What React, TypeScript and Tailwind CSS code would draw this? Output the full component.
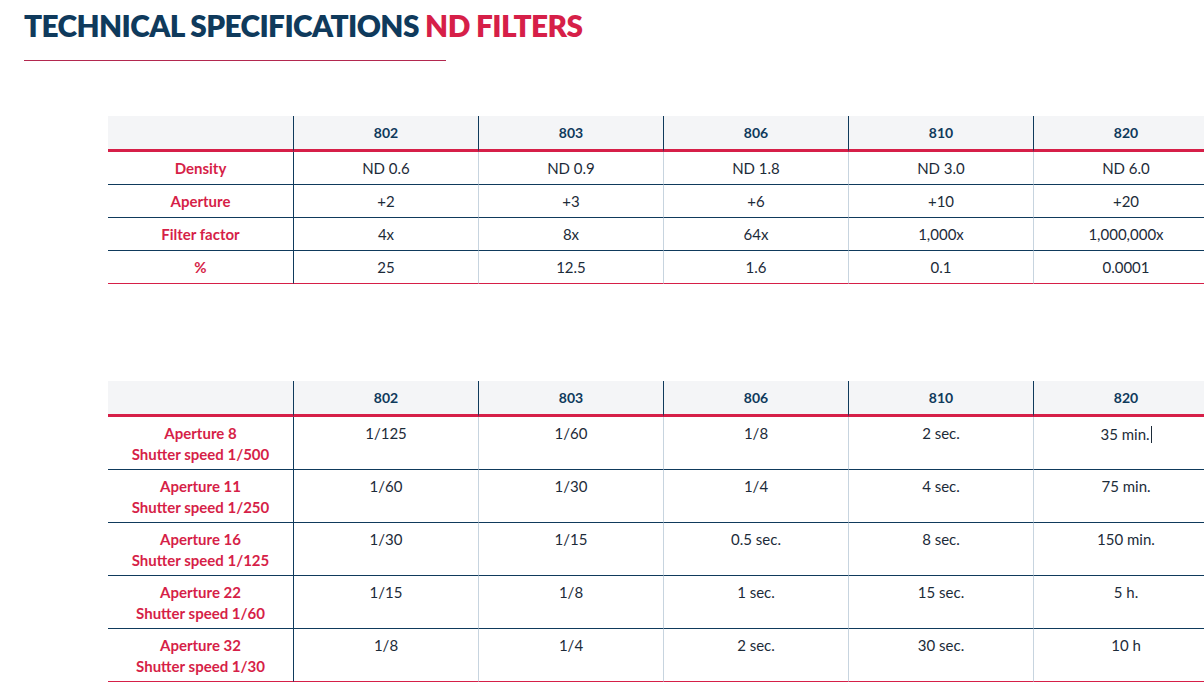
const cols = ["802", "803", "806", "810", "820"];

const specRows: { label: string; values: string[] }[] = [
  { label: "Density", values: ["ND 0.6", "ND 0.9", "ND 1.8", "ND 3.0", "ND 6.0"] },
  { label: "Aperture", values: ["+2", "+3", "+6", "+10", "+20"] },
  { label: "Filter factor", values: ["4x", "8x", "64x", "1,000x", "1,000,000x"] },
  { label: "%", values: ["25", "12.5", "1.6", "0.1", "0.0001"] },
];

const exposureRows: { label: [string, string]; values: string[] }[] = [
  { label: ["Aperture 8", "Shutter speed 1/500"], values: ["1/125", "1/60", "1/8", "2 sec.", "35 min."] },
  { label: ["Aperture 11", "Shutter speed 1/250"], values: ["1/60", "1/30", "1/4", "4 sec.", "75 min."] },
  { label: ["Aperture 16", "Shutter speed 1/125"], values: ["1/30", "1/15", "0.5 sec.", "8 sec.", "150 min."] },
  { label: ["Aperture 22", "Shutter speed 1/60"], values: ["1/15", "1/8", "1 sec.", "15 sec.", "5 h."] },
  { label: ["Aperture 32", "Shutter speed 1/30"], values: ["1/8", "1/4", "2 sec.", "30 sec.", "10 h"] },
];

function HeaderRow() {
  return (
    <thead>
      <tr className="h-[36px] bg-[#f4f5f7]">
        <th className="w-[185px] border-b-[3px] border-[#d61f48]" />
        {cols.map((c) => (
          <th
            key={c}
            className="w-[185px] border-b-[3px] border-l border-b-[#d61f48] border-l-[#0f3a5c] text-[14px] font-bold text-[#0f3a5c] align-middle"
          >
            {c}
          </th>
        ))}
      </tr>
    </thead>
  );
}

export default function App() {
  return (
    <div
      className="min-h-[691px] w-full overflow-hidden bg-white text-[#1c2b39]"
      style={{ fontFamily: "Lato, 'Open Sans', sans-serif" }}
    >
      <div className="pl-6 pt-[6px]">
        <h1 className="text-[29.8px] font-extrabold leading-[40px] tracking-[-0.6px] text-[#0f3a5c]">
          TECHNICAL SPECIFICATIONS <span className="text-[#d61f48]">ND FILTERS</span>
        </h1>
        <div className="mt-[14px] h-px w-[422px] bg-[#b3284f]" />
      </div>

      {/* specs */}
      <div className="mt-[55px] pl-[108px]">
        <table className="w-[1110px] table-fixed border-separate border-spacing-0">
          <HeaderRow />
          <tbody>
            {specRows.map((row, i) => {
              const last = i === specRows.length - 1;
              const bottom = last ? "border-b-[#d61f48]" : "border-b-[#0f3a5c]";
              return (
                <tr key={row.label} className="h-[33px]">
                  <td className={`border-b text-center text-[15px] font-bold text-[#d61f48] ${bottom}`}>
                    {row.label}
                  </td>
                  {row.values.map((v, j) => (
                    <td
                      key={j}
                      className={`border-b border-l text-center text-[15px] ${bottom} ${
                        j === 0 ? "border-l-[#0f3a5c]" : "border-l-[#c7d4df]"
                      }`}
                    >
                      {v}
                    </td>
                  ))}
                </tr>
              );
            })}
          </tbody>
        </table>
      </div>

      {/* exposure */}
      <div className="mt-[97px] pl-[108px]">
        <table className="w-[1110px] table-fixed border-separate border-spacing-0">
          <HeaderRow />
          <tbody>
            {exposureRows.map((row, i) => {
              const last = i === exposureRows.length - 1;
              const bottom = last ? "border-b-[#d61f48]" : "border-b-[#0f3a5c]";
              return (
                <tr key={row.label[0]} className="h-[53px]">
                  <td
                    className={`border-b pt-[6px] align-top text-center text-[15px] font-bold leading-[21px] text-[#d61f48] ${bottom}`}
                  >
                    {row.label[0]}
                    <br />
                    {row.label[1]}
                  </td>
                  {row.values.map((v, j) => (
                    <td
                      key={j}
                      className={`border-b border-l pt-[6px] align-top text-center text-[15px] leading-[21px] ${bottom} ${
                        j === 0 ? "border-l-[#0f3a5c]" : "border-l-[#c7d4df]"
                      }`}
                    >
                      {v}
                      {i === 0 && j === 4 && (
                        <span className="ml-px inline-block h-[17px] w-px translate-y-[3px] bg-[#1c2b39]" />
                      )}
                    </td>
                  ))}
                </tr>
              );
            })}
          </tbody>
        </table>
      </div>
    </div>
  );
}
